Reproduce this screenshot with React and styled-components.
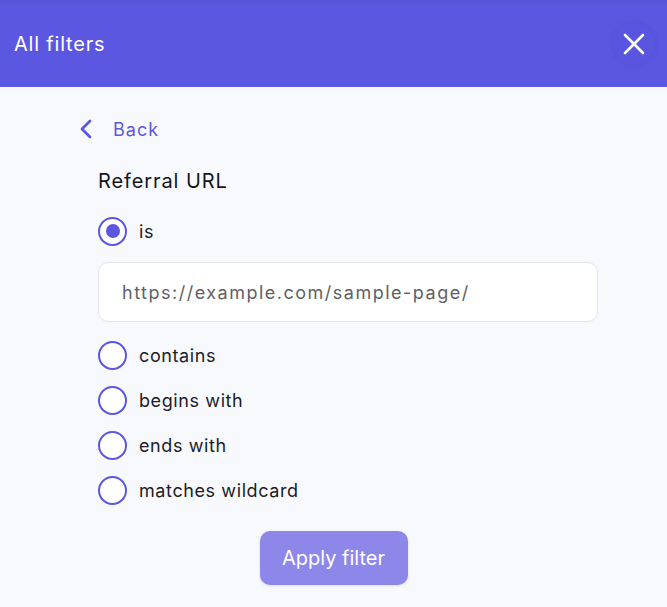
import React, { useState } from "react";
import styled, { createGlobalStyle } from "styled-components";

const Global = createGlobalStyle`
  html, body { margin: 0; padding: 0; background: #f8f9fc; }
  body { font-family: Inter, "Noto Sans", sans-serif; -webkit-font-smoothing: antialiased; }
  * { box-sizing: border-box; }
`;

const Page = styled.div`
  width: 667px;
  min-height: 607px;
  background: #f8f9fc;
  display: flex;
  flex-direction: column;
`;

const Header = styled.header`
  height: 87px;
  background: linear-gradient(#5852d8 0px, #5c57e0 6px, #5c57e0 100%);
  display: flex;
  align-items: center;
  justify-content: space-between;
  padding: 0 12px 0 14px;
`;

const Title = styled.h1`
  margin: 0;
  font-size: 20px;
  font-weight: 400;
  color: #fff;
  letter-spacing: 0.8px;
`;

const CloseButton = styled.button`
  width: 42px;
  height: 42px;
  border: none;
  border-radius: 50%;
  background: #5a55de;
  box-shadow: 0 0 4px rgba(60, 50, 180, 0.25);
  display: flex;
  align-items: center;
  justify-content: center;
  padding: 0;
  cursor: pointer;
`;

const Body = styled.main`
  display: flex;
  flex-direction: column;
  padding: 26px 0 0 80px;
`;

const BackLink = styled.button`
  display: flex;
  align-items: center;
  gap: 21px;
  border: none;
  background: none;
  padding: 0;
  height: 32px;
  font-family: inherit;
  font-size: 18px;
  letter-spacing: 1px;
  color: #5c57e0;
  cursor: pointer;
`;

const Form = styled.div`
  display: flex;
  flex-direction: column;
  padding-left: 18px;
  width: 518px;
`;

const Heading = styled.h2`
  margin: 22px 0 0;
  font-size: 20px;
  font-weight: 400;
  letter-spacing: 0.9px;
  color: #16161d;
  height: 28px;
  line-height: 28px;
`;

const Option = styled.label`
  display: flex;
  align-items: center;
  gap: 12px;
  height: 30px;
  margin-top: ${(p) => p.$mt}px;
  font-size: 18px;
  letter-spacing: 0.6px;
  color: #1c1c26;
  cursor: pointer;
`;

const Circle = styled.span`
  width: 29px;
  height: 29px;
  border-radius: 50%;
  border: 2.5px solid #5c57e0;
  background: #fff;
  display: flex;
  align-items: center;
  justify-content: center;
  flex: none;
  &::after {
    content: "";
    width: 14px;
    height: 14px;
    border-radius: 50%;
    background: ${(p) => (p.$on ? "#5c57e0" : "transparent")};
  }
`;

const UrlInput = styled.input`
  margin-top: 16px;
  width: 500px;
  height: 60px;
  border: 1px solid #e3e5ec;
  border-radius: 10px;
  background: #fff;
  padding: 0 23px;
  font-family: inherit;
  font-size: 18px;
  color: #555;
  outline: none;
  letter-spacing: 1.5px;
  &::placeholder { color: #5f5f66; }
`;

const Footer = styled.div`
  display: flex;
  justify-content: center;
  margin: 26px 0 0 -80px;
`;

const ApplyButton = styled.button`
  width: 148px;
  height: 54px;
  border: none;
  border-radius: 10px;
  background: #8c87e8;
  color: #fff;
  font-family: inherit;
  font-size: 20px;
  letter-spacing: 0;
  box-shadow: 0 1px 3px rgba(60, 50, 180, 0.15);
  cursor: pointer;
`;

const options = ["is", "contains", "begins with", "ends with", "matches wildcard"];

export default function App() {
  const [sel, setSel] = useState("is");
  return (
    <Page>
      <Global />
      <Header>
        <Title>All filters</Title>
        <CloseButton aria-label="Close">
          <svg width="22" height="22" viewBox="0 0 22 22" fill="none" stroke="#fff" strokeWidth="2.6" strokeLinecap="round">
            <path d="M2 2 L20 20 M20 2 L2 20" />
          </svg>
        </CloseButton>
      </Header>
      <Body>
        <BackLink>
          <svg width="12" height="20" viewBox="0 0 12 20" fill="none" stroke="#5c57e0" strokeWidth="2.8" strokeLinecap="round" strokeLinejoin="round">
            <path d="M10 2 L2 10 L10 18" />
          </svg>
          Back
        </BackLink>
        <Form>
          <Heading>Referral URL</Heading>
          <Option $mt={21} onClick={() => setSel("is")}>
            <Circle $on={sel === "is"} />
            is
          </Option>
          <UrlInput placeholder="https://example.com/sample-page/" />
          {options.slice(1).map((o, i) => (
            <Option key={o} $mt={i === 0 ? 18 : 15} onClick={() => setSel(o)}>
              <Circle $on={sel === o} />
              {o}
            </Option>
          ))}
        </Form>
        <Footer>
          <ApplyButton>Apply filter</ApplyButton>
        </Footer>
      </Body>
    </Page>
  );
}
